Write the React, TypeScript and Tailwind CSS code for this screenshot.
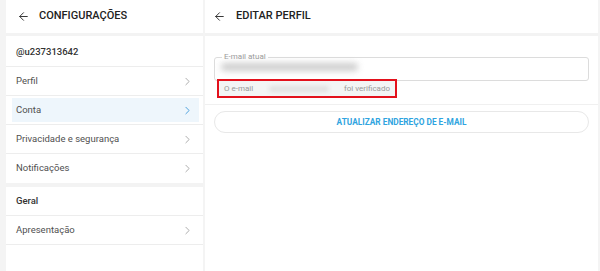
import { ArrowLeft, ChevronRight } from 'lucide-react'

const rows = [
  { label: 'Perfil' },
  { label: 'Conta', active: true },
  { label: 'Privacidade e segurança' },
  { label: 'Notificações', last: true },
]

function Row({ label, active, last }: { label: string; active?: boolean; last?: boolean }) {
  return (
    <div
      className={`h-[29px] flex items-center ${last ? '' : 'border-b border-[#ededed]'} ${active ? 'pl-[6px] pr-[4px] py-[2px]' : ''}`}
    >
      <div
        className={`flex items-center justify-between h-full flex-1 ${active ? 'bg-[#eef6fc] pl-[4px] pr-[5px]' : 'pl-[10px] pr-[9px]'}`}
      >
        <span className="text-[9.5px] text-[#505050]">{label}</span>
        <ChevronRight
          className={`h-[13px] w-[13px] ${active ? 'text-[#2b8fd6]' : 'text-[#9a9a9a]'}`}
          strokeWidth={1.5}
        />
      </div>
    </div>
  )
}

export default function App() {
  return (
    <div className="w-[600px] h-[271px] bg-[#f4f4f4] flex gap-[2px] pl-[6px] pr-[2px] font-['Roboto',sans-serif] overflow-hidden">
      {/* Left: settings menu */}
      <div className="w-[197px] bg-white flex flex-col">
        <div className="h-[36px] flex items-center gap-[9px] pl-[11px] border-b-[3px] border-[#f3f3f3]">
          <ArrowLeft className="h-[13px] w-[13px] text-[#333]" strokeWidth={1.8} />
          <span className="text-[11px] font-medium text-[#222]">CONFIGURAÇÕES</span>
        </div>
        <div className="h-[31px] flex items-center pl-[10px] pt-[2px] border-b border-[#ededed]">
          <span className="text-[9.5px] font-medium text-[#333]">@u237313642</span>
        </div>
        {rows.map((r) => (
          <Row key={r.label} {...r} />
        ))}
        <div className="h-[4px] bg-[#f3f3f3]" />
        <div className="h-[29px] flex items-center pl-[10px] border-b border-[#ededed]">
          <span className="text-[9.5px] font-medium text-[#333]">Geral</span>
        </div>
        <div className="h-[29px] flex items-center justify-between pl-[10px] pr-[9px] border-b border-[#ededed]">
          <span className="text-[9.5px] text-[#505050]">Apresentação</span>
          <ChevronRight className="h-[13px] w-[13px] text-[#9a9a9a]" strokeWidth={1.5} />
        </div>
      </div>

      {/* Right: edit profile */}
      <div className="flex-1 bg-white flex flex-col">
        <div className="h-[36px] flex items-center gap-[10px] pl-[8px] border-b-[3px] border-[#f3f3f3]">
          <ArrowLeft className="h-[13px] w-[13px] text-[#333]" strokeWidth={1.8} />
          <span className="text-[11px] font-medium text-[#222]">EDITAR PERFIL</span>
        </div>
        <div className="px-[9px] pt-[17px]">
          <fieldset className="border border-[#dcdcdc] rounded-[3px] h-[28px] px-[6px]">
            <legend className="text-[8px] text-[#9a9a9a] px-[2px] leading-[8px] ml-[1px]">E-mail atual</legend>
            <div className="mt-[2px] h-[8px] w-[137px] bg-[#c8c8c8] rounded-full blur-[3px] opacity-90" />
          </fieldset>
          <div className="-mt-[2px] ml-[3px] w-[180px] h-[19px] border-2 border-[#e3111c] bg-[#f3f5f5] flex items-center justify-between px-[5px]">
            <span className="text-[8px] text-[#9a9a9a]">O e-mail</span>
            <div className="h-[6px] w-[60px] bg-[#e0e0e0] rounded-full blur-[2px]" />
            <span className="text-[8px] text-[#9a9a9a]">foi verificado</span>
          </div>
        </div>
        <div className="mt-[6px] border-t border-[#f0f0f0]" />
        <div className="px-[9px] pt-[6px]">
          <button className="w-full h-[22px] rounded-full border border-[#e8e8e8] flex items-center justify-center text-[8.3px] font-bold text-[#2fa4e0]">
            ATUALIZAR ENDEREÇO DE E-MAIL
          </button>
        </div>
      </div>
    </div>
  )
}
